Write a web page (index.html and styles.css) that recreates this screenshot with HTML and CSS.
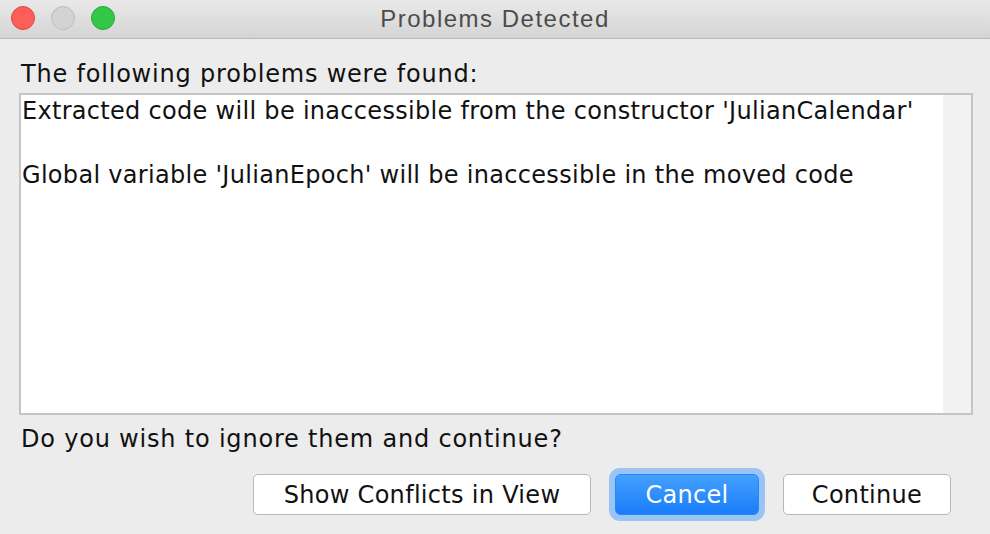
FILE: index.html
```html
<!DOCTYPE html>
<html>
<head>
<meta charset="utf-8">
<link rel="stylesheet" href="styles.css">
</head>
<body>
<div class="window">
  <div class="titlebar">
    <div class="lights">
      <span class="light red"></span>
      <span class="light gray"></span>
      <span class="light green"></span>
    </div>
    <div class="title">Problems Detected</div>
  </div>
  <div class="content">
    <div class="label">The following problems were found:</div>
    <div class="listbox">
      <div class="list">
        <div class="item">Extracted code will be inaccessible from the constructor 'JulianCalendar'</div>
        <div class="item">&nbsp;</div>
        <div class="item">Global variable 'JulianEpoch' will be inaccessible in the moved code</div>
      </div>
      <div class="track"></div>
    </div>
    <div class="question">Do you wish to ignore them and continue?</div>
    <div class="buttons">
      <button class="btn show">Show Conflicts in View</button>
      <button class="btn primary cancel">Cancel</button>
      <button class="btn cont">Continue</button>
    </div>
  </div>
</div>
</body>
</html>
```
FILE: styles.css
```css
html, body {
  margin: 0;
  padding: 0;
}
body {
  width: 990px;
  height: 534px;
  overflow: hidden;
  background: #ececec;
  font-family: "DejaVu Sans", "Liberation Sans", sans-serif;
  color: #111;
}
.window {
  width: 990px;
  height: 534px;
  display: flex;
  flex-direction: column;
}
.titlebar {
  height: 38px;
  border-bottom: 1px solid #b9b9b9;
  background: linear-gradient(#e9e9e9, #d4d4d4);
  display: flex;
  align-items: center;
  position: relative;
}
.lights {
  display: flex;
  gap: 16px;
  padding-left: 11px;
  padding-bottom: 3px;
}
.light {
  width: 22px;
  height: 22px;
  border-radius: 50%;
  border: 1px solid;
}
.red { background: #fc5f57; border-color: #de4841; }
.gray { background: #d3d3d3; border-color: #bdbdbd; }
.green { background: #33c748; border-color: #27aa35; }
.title {
  position: absolute;
  left: 0;
  right: 0;
  top: 0;
  height: 38px;
  line-height: 37px;
  text-align: center;
  font-family: "Liberation Sans", "Helvetica", sans-serif;
  font-size: 24px;
  letter-spacing: 1.5px;
  color: #4c4c4c;
}
.content {
  padding: 22px 17px 0 19px;
  display: flex;
  flex-direction: column;
}
.label, .question {
  font-size: 24px;
  letter-spacing: 0.8px;
  line-height: 26px;
  padding-left: 2px;
}
.label {
  margin-bottom: 6px;
}
.listbox {
  height: 318px;
  border: 2px solid #c4c4c4;
  background: #fff;
  display: flex;
}
.list {
  flex: 1;
  padding-left: 1px;
}
.item {
  font-size: 24px;
  letter-spacing: 0.3px;
  line-height: 32px;
  white-space: nowrap;
}
.track {
  width: 28px;
  background: #f2f2f2;
}
.question {
  margin-top: 11px;
}
.buttons {
  display: flex;
  justify-content: flex-end;
  gap: 24px;
  margin-top: 22px;
  padding-right: 22px;
}
.btn {
  height: 41px;
  border: 1px solid #b8b8b8;
  border-radius: 5px;
  background: #fff;
  font-family: "DejaVu Sans", "Liberation Sans", sans-serif;
  font-size: 24px;
  letter-spacing: 0.3px;
  color: #111;
  padding: 0;
}
.show { width: 338px; }
.cancel { width: 144px; }
.cont { width: 168px; }
.primary {
  background: linear-gradient(#44a0fd, #1a7dfb);
  border-color: #2b86f5;
  color: #fff;
  box-shadow: 0 0 0 6px #9ac4f6;
}
```
